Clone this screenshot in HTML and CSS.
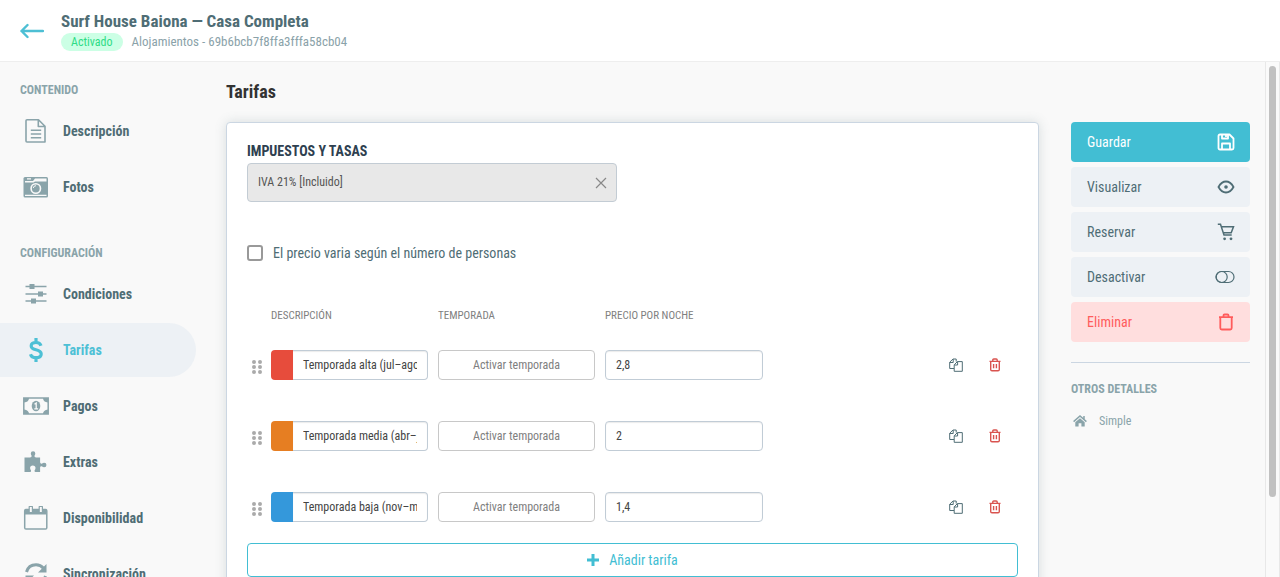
FILE: index.html
```html
<!DOCTYPE html>
<html lang="es">
<head>
  <meta charset="UTF-8" />
  <meta name="viewport" content="width=device-width, initial-scale=1" />
  <title>Tarifas - Surf House Baiona</title>
  <link rel="stylesheet" href="styles.css">
</head>
<body>

<!-- Row icons, reused in the table -->
<svg class="sprite" aria-hidden="true">
  <symbol id="icon-copy" viewBox="0 0 14 14">
    <path d="M5 10.5H.7V4.2L4 1h3.2v2.6M.8 4.5h3.4V1.2M5.2 6.8l3.2-3.2h4.9v9.7H5.2zM5.4 7h3.2V3.7" fill="none" stroke="currentColor" />
  </symbol>
  <symbol id="icon-trash" viewBox="0 0 12 14">
    <path d="M.5 3.4h11M3.8 3.2V2q0-1 1-1h2.4q1 0 1 1v1.2M1.7 3.6v7.8q0 1.3 1.3 1.3h6q1.3 0 1.3-1.3V3.600M4.600 6v4.300M7.400 6v4.300" fill="none" stroke="currentColor" stroke-width="1.400" />
  </symbol>
  <symbol id="icon-drag" viewBox="0 0 10 14">
    <path d="M2 2h0M8 2h0M2 7h0M8 7h0M2 12h0M8 12h0" stroke="currentColor" stroke-width="4" stroke-linecap="round" />
  </symbol>
</svg>

<header class="topbar">
  <a class="back" href="#" aria-label="Volver">
    <svg width="24" height="16" viewBox="0 0 24 16"><path d="M7.500 2L1.500 8l6 6M1.500 8h21.500" fill="none" stroke="currentColor" stroke-width="2.400" stroke-linecap="round" stroke-linejoin="round" /></svg>
  </a>
  <div>
    <div class="topbar-title">Surf House Baiona — Casa Completa</div>
    <div class="topbar-info">
      <span class="badge">Activado</span>
      <span>Alojamientos - 69b6bcb7f8ffa3fffa58cb04</span>
    </div>
  </div>
</header>

<div class="page">
  <nav class="sidebar">
    <h2>Contenido</h2>
    <a href="#">
      <svg viewBox="0 0 28 28"><path d="M5 2.800h11.500l6.500 6.500v15.700H5q-1 0-1-1V3.800q0-1 1-1zM16.300 3v6.500H23" fill="none" stroke="currentColor" stroke-width="1.600" stroke-linejoin="round" /><path d="M8.800 13.300h10.400M8.800 17h10.400M8.800 20.700h10.400" stroke="currentColor" stroke-width="1.500" /></svg>
      Descripción
    </a>
    <a href="#">
      <svg viewBox="0 0 28 28"><path d="M4 4h20.500q1.500 0 1.500 1.500v17.500q0 1.500-1.500 1.500H3q-1.500 0-1.500-1.500V5.500Q1.500 4 3 4z" fill="currentColor" /><path d="M3 8h8l2-2.500h11.500v3H13l-1.500 1H3zM3 21.700h21.500v1.300H3zM5 5.200h4v1.200H5z" fill="#f9f9f9" /><circle cx="13.800" cy="15.500" r="4.700" fill="currentColor" stroke="#f9f9f9" stroke-width="1.600" /><path d="M11.300 15a2.700 2.700 0 0 1 2.700-2.300" fill="none" stroke="#f9f9f9" /></svg>
      Fotos
    </a>

    <h2>Configuración</h2>
    <a href="#">
      <svg viewBox="0 0 28 28"><path d="M3.500 6.500h21M3.500 14h21M3.500 21h21" stroke="currentColor" stroke-width="1.500" /><path d="M7.500 4h5v5h-5zM16 11.500h5v5h-5zM9 18.500h5v5H9z" fill="currentColor" /></svg>
      Condiciones
    </a>
    <a class="active" href="#">
      <svg viewBox="0 0 28 28"><path d="M19 9.700q-1-3.200-5-3.200-4.800 0-4.800 3.500 0 2.600 4.800 3.700 5.200 1.200 5.200 4.300 0 3.700-5.200 3.700-4.500 0-5.500-3.500M14 2v4.500M14 21.500V26" fill="none" stroke="currentColor" stroke-width="3.200" /></svg>
      Tarifas
    </a>
    <a href="#">
      <svg viewBox="0 0 28 28"><path d="M1.800 6h24.400v16H1.800z" fill="none" stroke="currentColor" stroke-width="1.500" /><path d="M2 6h5q0 4-5 4.500zM26 6h-5q0 4 5 4.500zM2 22h5q0-4-5-4.500zM26 22h-5q0-4 5-4.500z" fill="currentColor" /><ellipse cx="14" cy="14" rx="4.300" ry="5.200" fill="currentColor" /><path d="M12.500 12.200l1.700-1.200v5.500M12.300 16.800h3.800" fill="none" stroke="#f9f9f9" stroke-width="1.300" /></svg>
      Pagos
    </a>
    <a href="#">
      <svg viewBox="0 0 28 28"><path d="M2.500 9.500h5.500q2 0 1.600-1.700-.8-1.300-.8-2.300a2.200 2.200 0 0 1 4.500 0q0 1-.8 2.300-.4 1.700 1.600 1.700h4v4.800q0 1.500 1.700 1.400 1.200-1 2.400-1a2.200 2.200 0 0 1 0 4.500q-1.200 0-2.400-1-1.700-.2-1.700 1.400V24h-4.700q-1.300-.3-.8-1.700.9-1 .9-2.200a2.700 2.700 0 0 0-5.400 0q0 1.200.9 2.200.5 1.400-.8 1.700H2.500z" fill="currentColor" /></svg>
      Extras
    </a>
    <a href="#">
      <svg viewBox="0 0 28 28"><path d="M4 5.500h19.500q1.300 0 1.300 1.300v17q0 1.300-1.300 1.300H4q-1.300 0-1.300-1.300v-17q0-1.300 1.300-1.300z" fill="none" stroke="currentColor" stroke-width="1.500" /><path d="M3 6h21.500v4.500H3z" fill="currentColor" /><path d="M7.200 2.500h3.200v6H7.200zM17.200 2.500h3.200v6h-3.200z" fill="#f9f9f9" stroke="currentColor" stroke-width="1.200" stroke-linejoin="round" /></svg>
      Disponibilidad
    </a>
    <a href="#">
      <svg viewBox="0 0 28 28"><path d="M4.500 12q2-7.300 9.500-7.300 4.500 0 7.500 3.500M23.500 16q-2 7.300-9.500 7.300-4.500 0-7.500-3.500" fill="none" stroke="currentColor" stroke-width="3" /><path d="M24.500 4v8.500H16zM3.500 24v-8.500H12z" fill="currentColor" /></svg>
      Sincronización
    </a>
  </nav>

  <main>
    <h1>Tarifas</h1>

    <form class="card">
      <label class="field-label" for="tax">Impuestos y tasas</label>
      <div class="tax">
        <select id="tax">
          <option>IVA 21% [Incluido]</option>
        </select>
        <button type="button" class="clear" aria-label="Quitar impuesto">
          <svg width="12" height="12" viewBox="0 0 12 12"><path d="M1 1l10 10M11 1L1 11" stroke="currentColor" stroke-width="1.200" /></svg>
        </button>
      </div>

      <label class="check">
        <input type="checkbox">
        El precio varia según el número de personas
      </label>

      <table>
        <thead>
          <tr>
            <th class="col-drag"></th>
            <th class="col-field">Descripción</th>
            <th class="col-field">Temporada</th>
            <th class="col-price">Precio por noche</th>
            <th></th>
          </tr>
        </thead>
        <tbody>
          <tr>
            <td class="drag"><svg width="10" height="14"><use href="#icon-drag" /></svg></td>
            <td>
              <div class="rate-name">
                <input type="color" value="#e74c3c" aria-label="Color">
                <input type="text" value="Temporada alta (jul–ago)" aria-label="Descripción">
              </div>
            </td>
            <td><button type="button" class="season">Activar temporada</button></td>
            <td><input type="text" class="price" value="2,8" aria-label="Precio por noche"></td>
            <td>
              <div class="actions">
                <button type="button" aria-label="Duplicar"><svg width="14" height="14"><use href="#icon-copy" /></svg></button>
                <button type="button" class="remove" aria-label="Eliminar tarifa"><svg width="12" height="14"><use href="#icon-trash" /></svg></button>
              </div>
            </td>
          </tr>
          <tr>
            <td class="drag"><svg width="10" height="14"><use href="#icon-drag" /></svg></td>
            <td>
              <div class="rate-name">
                <input type="color" value="#e67e22" aria-label="Color">
                <input type="text" value="Temporada media (abr–jun)" aria-label="Descripción">
              </div>
            </td>
            <td><button type="button" class="season">Activar temporada</button></td>
            <td><input type="text" class="price" value="2" aria-label="Precio por noche"></td>
            <td>
              <div class="actions">
                <button type="button" aria-label="Duplicar"><svg width="14" height="14"><use href="#icon-copy" /></svg></button>
                <button type="button" class="remove" aria-label="Eliminar tarifa"><svg width="12" height="14"><use href="#icon-trash" /></svg></button>
              </div>
            </td>
          </tr>
          <tr>
            <td class="drag"><svg width="10" height="14"><use href="#icon-drag" /></svg></td>
            <td>
              <div class="rate-name">
                <input type="color" value="#3498db" aria-label="Color">
                <input type="text" value="Temporada baja (nov–mar)" aria-label="Descripción">
              </div>
            </td>
            <td><button type="button" class="season">Activar temporada</button></td>
            <td><input type="text" class="price" value="1,4" aria-label="Precio por noche"></td>
            <td>
              <div class="actions">
                <button type="button" aria-label="Duplicar"><svg width="14" height="14"><use href="#icon-copy" /></svg></button>
                <button type="button" class="remove" aria-label="Eliminar tarifa"><svg width="12" height="14"><use href="#icon-trash" /></svg></button>
              </div>
            </td>
          </tr>
        </tbody>
      </table>

      <button type="button" class="add-rate">
        <svg width="12" height="12" viewBox="0 0 12 12"><path d="M6 0v12M0 6h12" stroke="currentColor" stroke-width="3" /></svg>
        Añadir tarifa
      </button>
    </form>
  </main>

  <aside>
    <button class="save">
      Guardar
      <svg width="18" height="18" viewBox="0 0 18 18"><path d="M3 1.500h9.500l4 4V15q0 1.500-1.500 1.500H3q-1.500 0-1.500-1.500V3q0-1.500 1.500-1.500zM5 1.500v4h6v-4M5 16.500v-6h8v6M9 2v2" fill="none" stroke="currentColor" stroke-width="1.800" stroke-linejoin="round" /></svg>
    </button>
    <button>
      Visualizar
      <svg width="18" height="18" viewBox="0 0 18 18"><path d="M1.500 9Q4.500 3.500 9 3.500T16.500 9Q13.500 14.500 9 14.500T1.500 9z" fill="none" stroke="currentColor" stroke-width="1.800" /><circle cx="9" cy="9" r="1.800" fill="currentColor" /></svg>
    </button>
    <button>
      Reservar
      <svg width="18" height="18" viewBox="0 0 18 18"><path d="M.8 1.300h2.700L7 12h7.700M4 3.700h12.500l-2.300 6H6.200" fill="none" stroke="currentColor" stroke-width="1.500" /><circle cx="7.600" cy="15.800" r="1.400" fill="currentColor" /><circle cx="14" cy="15.800" r="1.400" fill="currentColor" /></svg>
    </button>
    <button>
      Desactivar
      <svg width="20" height="18" viewBox="0 0 20 18"><rect x="1" y="3.500" width="18" height="11" rx="5.500" fill="none" stroke="currentColor" stroke-width="1.200" /><circle cx="6.700" cy="9" r="5.500" fill="none" stroke="currentColor" stroke-width="1.200" /></svg>
    </button>
    <button class="delete">
      Eliminar
      <svg width="18" height="18" viewBox="0 0 18 18"><path d="M2 4.200h14M6.500 4V2.500q0-1 1-1h3q1 0 1 1V4M3.300 4.500V15q0 1.500 1.500 1.500h8.400q1.500 0 1.500-1.500V4.500" fill="none" stroke="currentColor" stroke-width="1.800" /></svg>
    </button>

    <div class="details">
      <h2>Otros detalles</h2>
      <p>
        <svg width="14" height="12" viewBox="0 0 14 12"><path d="M.6 6.600L7 1l6.400 5.600M11 1v3" fill="none" stroke="currentColor" stroke-width="1.500" /><path d="M2.300 7.200L7 3.200l4.700 4V11.500H8.400V8.300H5.600v3.200H2.300z" fill="currentColor" /></svg>
        Simple
      </p>
    </div>
  </aside>

  <div class="scrollbar"><div class="thumb"></div></div>
</div>

</body>
</html>
```
FILE: styles.css
```css
* {
  box-sizing: border-box;
}

body {
  margin: 0;
  height: 100vh;
  display: flex;
  flex-direction: column;
  overflow: hidden;
  background: #f9f9f9;
  color: #4f6d75;
  font-family: "Roboto Condensed", "Liberation Sans Narrow", Roboto, sans-serif;
  font-size: 14px;
  line-height: 20px;
}

h1, h2, p {
  margin: 0;
}

a {
  color: inherit;
  text-decoration: none;
}

button, input, select {
  font: inherit;
  color: inherit;
  margin: 0;
}

button {
  cursor: pointer;
}

svg {
  display: block;
  flex: none;
}

.sprite {
  position: absolute;
  width: 0;
  height: 0;
}

.topbar {
  flex: none;
  display: flex;
  align-items: center;
  gap: 17px;
  height: 62px;
  padding: 0 20px;
  background: #fff;
  border-bottom: 1px solid #eee;
}

.back {
  color: #4dbfd4;
}

.topbar-title {
  font-size: 17px;
  font-weight: bold;
}

.topbar-info {
  display: flex;
  align-items: center;
  gap: 9px;
  margin-top: 2px;
  font-size: 13px;
  line-height: 18px;
  color: #8aa2a9;
}

.badge {
  padding: 0 10px;
  border-radius: 9px;
  background: #ccffe5;
  font-size: 12px;
  color: #2edc85;
}

.page {
  flex: 1;
  min-height: 0;
  display: flex;
}

/* Sidebar */

.sidebar {
  flex: none;
  width: 196px;
  padding-top: 18px;
}

h2 {
  font-size: 12px;
  font-weight: bold;
  line-height: 20px;
  text-transform: uppercase;
  color: #8aa4aa;
}

.sidebar h2 {
  padding-left: 20px;
  margin-bottom: 4px;
}

.sidebar a + h2 {
  margin-top: 29px;
}

.sidebar a {
  display: flex;
  align-items: center;
  gap: 13px;
  height: 54px;
  margin-bottom: 2px;
  padding-left: 22px;
  border-radius: 0 27px 27px 0;
  font-weight: bold;
}

.sidebar svg {
  width: 28px;
  height: 28px;
  color: #8aa4aa;
}

.sidebar .active {
  background: #edf1f5;
  color: #4dc0d5;
}

.sidebar .active svg {
  color: #4dc0d5;
}

/* Main */

main {
  flex: 1;
  min-width: 0;
  padding: 18px 32px 20px 30px;
}

h1 {
  margin-bottom: 18px;
  font-size: 18px;
  line-height: 24px;
  color: #333;
}

.card {
  padding: 20px;
  background: #fff;
  border: 1px solid #cbd6e2;
  border-radius: 4px;
  box-shadow: 0 0 12px rgba(80, 110, 115, 0.2);
}

.field-label {
  display: block;
  margin-bottom: 4px;
  font-weight: bold;
  line-height: 16px;
  text-transform: uppercase;
  color: #2e3f50;
}

.tax {
  position: relative;
  width: 48%;
}

.tax select {
  display: block;
  width: 100%;
  height: 39px;
  padding: 0 32px 2px 10px;
  appearance: none;
  background: #e8e8e8;
  border: 1px solid #c3ccd4;
  border-radius: 4px;
  font-size: 12px;
  color: #555;
}

.clear {
  position: absolute;
  top: 0;
  right: 0;
  height: 100%;
  padding: 0 10px;
  background: none;
  border: none;
  color: #888;
}

.check {
  display: flex;
  align-items: center;
  gap: 10px;
  margin: 41px 0 37px;
}

.check input {
  appearance: none;
  width: 16px;
  height: 16px;
  background: #fff;
  border: 2px solid #999;
  border-radius: 3px;
}

table {
  width: 100%;
  border-collapse: collapse;
  table-layout: fixed;
}

th {
  height: 30px;
  padding: 2px 0 0;
  font-size: 11px;
  font-weight: normal;
  text-align: left;
  text-transform: uppercase;
  color: #808080;
}

td {
  height: 71px;
  padding: 0 10px 2px 0;
}

.col-drag {
  width: 24px;
}

.col-field {
  width: 167px;
}

.col-price {
  width: 168px;
}

td.drag {
  padding: 2px 0 0 5px;
  color: #aaa;
}

td:last-child {
  padding: 0 0 2px;
}

.rate-name {
  display: flex;
}

input[type="text"] {
  width: 100%;
  min-width: 0;
  height: 30px;
  padding: 0 10px;
  background: #fff;
  border: 1px solid #c1ccd6;
  border-radius: 4px;
  box-shadow: inset 0 1px 1px rgba(0, 0, 0, 0.08);
  font-size: 12px;
  color: #444;
}

.rate-name input[type="text"] {
  border-left: 0;
  border-radius: 0 4px 4px 0;
}

input[type="color"] {
  appearance: none;
  flex: none;
  width: 22px;
  height: 30px;
  padding: 0;
  background: none;
  border: none;
}

input[type="color"]::-webkit-color-swatch-wrapper {
  padding: 0;
}

input[type="color"]::-webkit-color-swatch {
  border: none;
  border-radius: 4px 0 0 4px;
}

.season {
  display: block;
  width: 100%;
  height: 30px;
  padding: 0;
  background: #fff;
  border: 1px solid #c8c8c8;
  border-radius: 4px;
  font-size: 12px;
  color: #808080;
}

.actions {
  display: flex;
  justify-content: flex-end;
  padding-right: 4px;
}

.actions button {
  display: flex;
  justify-content: center;
  align-items: center;
  width: 39px;
  height: 30px;
  padding: 0;
  background: none;
  border: none;
}

.actions .remove {
  color: #d9534f;
}

.add-rate {
  display: flex;
  justify-content: center;
  align-items: center;
  gap: 10px;
  width: 100%;
  height: 34px;
  background: #fff;
  border: 1px solid #42bed3;
  border-radius: 4px;
  color: #42bed3;
}

/* Right column */

aside {
  flex: none;
  width: 194px;
  padding: 60px 15px 0 0;
}

aside button {
  display: flex;
  justify-content: space-between;
  align-items: center;
  width: 100%;
  height: 40px;
  margin-bottom: 5px;
  padding: 0 15px 0 16px;
  background: #edf1f5;
  border: none;
  border-radius: 4px;
}

aside .save {
  background: #42bed3;
  color: #fff;
}

aside .delete {
  background: #ffdede;
  color: #ff5c5c;
}

.details {
  margin-top: 20px;
  padding-top: 16px;
  border-top: 1px solid #cbd6e2;
}

.details p {
  display: flex;
  align-items: center;
  gap: 12px;
  margin-top: 12px;
  padding-left: 2px;
  font-size: 12px;
  color: #8aa4aa;
}

.scrollbar {
  flex: none;
  width: 15px;
  padding: 4px 3px;
  background: #fafafa;
  border-left: 1px solid #e8e8e8;
  border-right: 1px solid #e8e8e8;
}

.thumb {
  height: 85%;
  border-radius: 4px;
  background: #c1c1c1;
}
```
